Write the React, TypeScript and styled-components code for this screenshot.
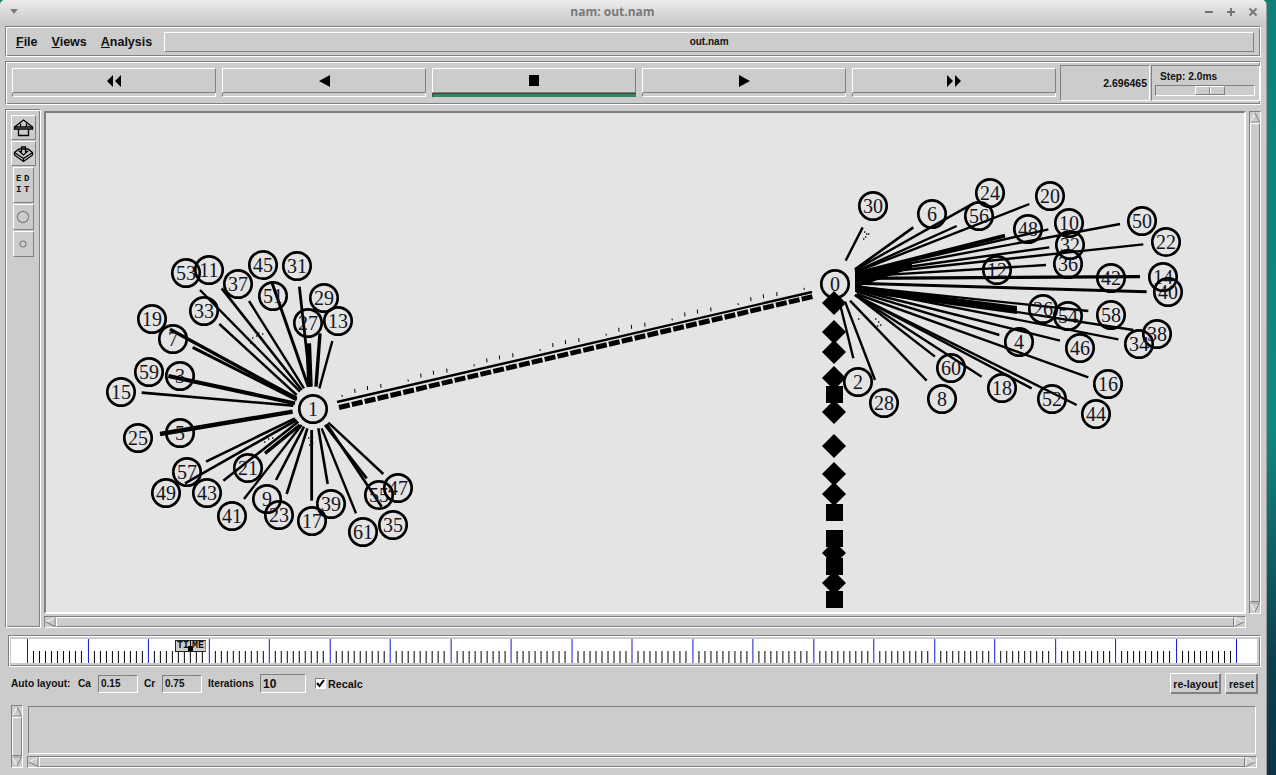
import React from "react";
import styled, { createGlobalStyle, css } from "styled-components";

const Global = createGlobalStyle`
  html, body { margin: 0; padding: 0; background: #0f7f78; overflow: hidden; }
  * { box-sizing: border-box; }
`;

const raised = css`
  border-style: solid;
  border-width: 1px;
  border-color: #fff #808080 #808080 #fff;
`;
const sunken = css`
  border-style: solid;
  border-width: 1px;
  border-color: #808080 #fff #fff #808080;
`;
const groove = css`
  ${sunken};
  box-shadow: inset 1px 1px 0 #fff, inset -1px -1px 0 #808080;
`;
const uiFont = css`
  font-family: "Liberation Sans", Arial, sans-serif;
  font-weight: 700;
  color: #111;
`;

const Screen = styled.div`
  width: 1276px;
  height: 775px;
  display: flex;
  overflow: hidden;
`;
const Win = styled.div`
  width: 1267px;
  height: 775px;
  background: #cccccc;
  display: flex;
  flex-direction: column;
  border-right: 1px solid #9a9a9a;
  border-radius: 5px 5px 0 0;
  overflow: hidden;
`;
const Desktop = styled.div`
  flex: 1;
  background: linear-gradient(170deg, #0f7f78 0%, #12897f 55%, #0c3f4c 85%, #0e3346 100%);
`;
const TitleBar = styled.div`
  height: 26px;
  flex: none;
  background: linear-gradient(#ececec, #c6c6c6);
  display: flex;
  align-items: center;
  justify-content: space-between;
  padding: 0 8px 2px 10px;
  position: relative;
`;
const TitleText = styled.div`
  position: absolute;
  left: 0;
  right: 41px;
  top: 3px;
  text-align: center;
  font: 700 12px "Open Sans", "DejaVu Sans", sans-serif;
  color: #7a7a7a;
`;
const WinButtons = styled.div`
  display: flex;
  gap: 12px;
  align-items: center;
`;
const MenuFrame = styled.div`
  ${groove};
  height: 31px;
  margin: 0 5px;
  flex: none;
  display: flex;
  align-items: center;
  padding: 0 6px 0 10px;
`;
const MenuItem = styled.div`
  ${uiFont};
  font-size: 12.5px;
  margin-right: 14px;
  u { text-decoration: underline; }
`;
const FileName = styled.div`
  ${raised};
  ${uiFont};
  font-size: 10px;
  flex: 1;
  height: 20px;
  margin-left: -2px;
  display: flex;
  align-items: center;
  justify-content: center;
`;
const ToolFrame = styled.div`
  ${groove};
  height: 44px;
  margin: 4px 5px 0;
  flex: none;
  display: flex;
  padding: 3px 1px 3px 6px;
`;
const PlayColumn = styled.div`
  width: 204px;
  flex: none;
  margin: 3px 6px 0 0;
  display: flex;
  flex-direction: column;
`;
const PlayButton = styled.div`
  ${raised};
  height: 25px;
  display: flex;
  align-items: center;
  justify-content: center;
`;
const PlayStrip = styled.div<{ $on?: boolean }>`
  height: 4px;
  background: ${(p) => (p.$on ? "#2e8b5b" : "#cccccc")};
  border-style: solid;
  border-width: ${(p) => (p.$on ? "1px 0 0 1px" : "0 1px 1px 1px")};
  border-color: ${(p) => (p.$on ? "#444" : "#fff")};
  border-left-color: ${(p) => (p.$on ? "#444" : "#808080")};
`;
const TimeBox = styled.div`
  ${sunken};
  ${uiFont};
  font-size: 10.5px;
  width: 90px;
  flex: none;
  margin-left: -2px;
  display: flex;
  align-items: center;
  justify-content: flex-end;
  padding-right: 2px;
`;
const StepBox = styled.div`
  ${sunken};
  ${uiFont};
  width: 109px;
  flex: none;
  margin-left: 1px;
  padding: 4px 3px 0;
  font-size: 10.2px;
`;
const StepLabel = styled.div`
  padding-left: 5px;
  height: 14px;
  line-height: 13px;
`;
const SliderTrack = styled.div`
  ${sunken};
  height: 11px;
  width: 100px;
  position: relative;
  margin-top: 1px;
`;
const SliderThumb = styled.div`
  ${raised};
  position: absolute;
  left: 39px;
  top: 0;
  height: 9px;
  width: 30px;
  &::after {
    content: "";
    position: absolute;
    left: 13px;
    top: 0;
    bottom: 0;
    border-left: 1px solid #808080;
    border-right: 1px solid #fff;
  }
`;
const Main = styled.div`
  height: 519px;
  margin: 4px 5px 0;
  flex: none;
  display: flex;
`;
const SideBar = styled.div`
  ${groove};
  width: 36px;
  flex: none;
  display: flex;
  flex-direction: column;
  align-items: center;
  padding-top: 5px;
`;
const SideButton = styled.div<{ $h: number; $narrow?: boolean }>`
  ${raised};
  width: ${(p) => (p.$narrow ? 21 : 25)}px;
  height: ${(p) => p.$h}px;
  margin-bottom: 1px;
  display: flex;
  align-items: center;
  justify-content: center;
  flex: none;
`;
const EditText = styled.div`
  font: 700 9px/11px "Liberation Mono", monospace;
  color: #111;
  text-align: center;
  letter-spacing: 2.6px;
  margin-right: -2px;
  white-space: pre;
`;
const CanvasColumn = styled.div`
  width: 1202px;
  flex: none;
  margin-left: 3px;
  margin-top: 2px;
  display: flex;
  flex-direction: column;
`;
const CanvasFrame = styled.div`
  ${sunken};
  border-width: 2px;
  border-color: #808080 #fff #fff #808080;
  height: 503px;
  background: #e4e4e4;
  overflow: hidden;
`;
const GraphSvg = styled.svg`
  display: block;
  width: 1198px;
  height: 499px;
`;
const HScroll = styled.div`
  ${sunken};
  height: 12px;
  margin-top: 2px;
  flex: none;
  display: flex;
  background: #cccccc;
`;
const VScroll = styled.div`
  ${sunken};
  width: 12px;
  margin-left: 3px;
  margin-top: 2px;
  height: 503px;
  display: flex;
  flex-direction: column;
  flex: none;
`;
const ScrollThumb = styled.div`
  ${raised};
  flex: 1;
`;
const ArrowCell = styled.div<{ $v?: boolean }>`
  width: ${(p) => (p.$v ? "100%" : "11px")};
  height: ${(p) => (p.$v ? "11px" : "100%")};
  display: block;
  flex: none;
  svg { display: block; width: 100%; height: 100%; }
`;
const TimelineFrame = styled.div`
  ${groove};
  height: 32px;
  margin: 7px 5px 0 8px;
  padding: 3px 3px 3px 2px;
  flex: none;
`;
const TimelineInner = styled.div`
  height: 24px;
  background: #fff;
  position: relative;
  svg { display: block; width: 100%; height: 100%; }
`;
const TimeMarker = styled.div`
  position: absolute;
  left: 164px;
  top: 1px;
  width: 31px;
  height: 12px;
  background: #cccccc;
  border: 1px solid #222;
  border-right-color: #888;
  font: 700 10px/10px "Liberation Mono", monospace;
  color: #111;
  display: flex;
  justify-content: space-between;
  padding: 0 1px;
  &::before {
    content: "";
    position: absolute;
    left: 14px;
    top: 0;
    width: 1px;
    height: 10px;
    background: #000;
  }
  &::after {
    content: "";
    position: absolute;
    left: 12px;
    top: 5px;
    width: 5px;
    height: 5px;
    background: #000;
  }
`;
const AutoRow = styled.div`
  ${uiFont};
  font-size: 10.2px;
  height: 21px;
  margin: 6px 8px 0 11px;
  flex: none;
  display: flex;
  align-items: center;
`;
const AutoLabel = styled.div<{ $w: number }>`
  width: ${(p) => p.$w}px;
  flex: none;
`;
const RecalcLabel = styled.div`
  font-size: 10.8px;
`;
const Field = styled.div<{ $w: number; $big?: boolean }>`
  ${sunken};
  width: ${(p) => p.$w}px;
  height: ${(p) => (p.$big ? 19 : 18)}px;
  font-size: ${(p) => (p.$big ? 12 : 10)}px;
  padding-left: 2px;
  margin-right: 6px;
  display: flex;
  align-items: center;
  flex: none;
`;
const Check = styled.div`
  ${sunken};
  width: 11px;
  height: 11px;
  background: #fff;
  margin: 0 2px 0 3px;
  display: flex;
  svg { display: block; }
`;
const Spacer = styled.div`
  flex: 1;
`;
const ActionButton = styled.div<{ $w: number }>`
  ${raised};
  box-shadow: inset -1px -1px 0 #808080;
  font-size: 10.5px;
  width: ${(p) => p.$w}px;
  height: 21px;
  margin-left: 4px;
  display: flex;
  align-items: center;
  justify-content: center;
`;
const LogArea = styled.div`
  height: 63px;
  margin: 11px 9px 0 11px;
  display: flex;
  flex: none;
`;
const LogV = styled.div`
  ${sunken};
  width: 12px;
  height: 63px;
  display: flex;
  flex-direction: column;
  flex: none;
`;
const LogColumn = styled.div`
  flex: 1;
  margin-left: 4px;
  display: flex;
  flex-direction: column;
`;
const LogBox = styled.div`
  ${sunken};
  height: 50px;
  margin: 1px 1px 0 1px;
`;

/* ---------- graph data, in screen coordinates ---------- */
const nodes: [string, number, number][] = [
  ["53",186,273],["11",209,270],["45",263,265],["31",297,266],["37",238,284],["51",273,296],
  ["29",324,298],["27",308,323],["13",338,321],["33",204,311],["19",152,319],["7",173,339],
  ["59",149,372],["3",180,376],["15",121,392],["1",313,409],["25",138,438],["5",180,433],
  ["57",187,472],["21",248,468],["49",166,493],["43",207,493],["41",232,516],["9",267,499],
  ["23",279,515],["17",312,521],["39",331,504],["55",379,495],["47",398,488],["35",393,525],
  ["61",363,532],
  ["30",873,206],["6",932,214],["24",990,193],["56",979,216],["20",1050,196],["48",1028,229],
  ["10",1069,223],["32",1070,245],["36",1068,264],["50",1142,221],["22",1166,242],["12",997,270],
  ["42",1111,278],["14",1163,277],["40",1168,292],["0",835,284],["26",1043,309],["54",1068,316],
  ["58",1111,315],["38",1157,334],["34",1139,344],["46",1080,348],["4",1019,342],["16",1108,384],
  ["60",951,368],["18",1002,388],["8",942,399],["52",1052,399],["44",1096,414],["2",858,382],
  ["28",884,403],
];

/* x1 y1 x2 y2 width, measured on 3x crops of each cluster */
const leftLinks: number[][] = [
  [300,150,600,455,2.4],[365,145,605,450,2.6],[358,252,590,465,2.4],[447,183,612,445,2.4],[515,125,625,440,3],
  [598,140,632,440,2.8],[625,310,630,440,5.5],[660,280,648,440,3.4],[697,303,658,445,2.4],[210,268,590,475,3.4],
  [278,322,590,480,3],[205,408,585,490,4],[125,458,580,497,2.6],[180,582,578,515,4.4],[318,665,585,535,2.6],
  [255,730,590,540,2.6],[370,722,595,545,2.6],[495,640,600,555,3.4],[432,777,605,555,2.4],[528,720,612,560,2.6],
  [560,762,622,565,2.6],[635,782,635,570,2.8],[683,732,655,565,2.6],[768,820,665,565,2.4],[800,715,675,555,2.8],
  [845,800,680,552,2.6],[850,702,685,548,2.4],
];
const rightLinks: number[][] = [
  [188,172,137,272,2.4],[340,172,165,298,2.6],[470,168,165,305,2.4],[520,100,165,300,2.4],[688,102,170,305,2.4],
  [615,197,170,310,3.8],[745,178,170,310,2.4],[748,232,170,312,2.4],[960,162,170,310,2.4],[1030,223,170,315,2.4],
  [738,285,170,320,2.4],[1020,320,170,325,3.4],[1040,365,170,340,3],[865,423,170,350,2.4],[1000,480,170,352,2.4],
  [955,508,170,355,2.4],[780,512,170,360,2.4],[598,495,170,365,2.4],[865,622,170,372,2.4],[405,560,170,378,2.4],
  [545,620,165,375,2.4],[695,655,165,375,2.4],[830,705,165,375,2.4],[380,632,150,392,2.4],[160,565,122,410,2.4],
  [225,630,135,395,2.4],
];
const mapLeft = (l: number[]) => [100 + l[0] / 3, 240 + l[1] / 3, 100 + l[2] / 3, 240 + l[3] / 3, l[4]];
const mapRight = (l: number[]) => [800 + l[0] / 3, 170 + l[1] / 3, 800 + l[2] / 3, 170 + l[3] / 3, l[4]];
const links = [...leftLinks.map(mapLeft), ...rightLinks.map(mapRight)];

const diamonds = [303, 332, 352, 378, 412, 446, 474, 494, 553, 583];
const squares = [386, 504, 530, 558, 591];
const lineY = (x: number) => 402 - (x - 337) * 0.2316;
const ticks: [number, number, number][] = [];
for (let g = 0; g < 8; g++) {
  [0, 12.7, 25.3, 38.7].forEach((d, i) => {
    const x = 342 + g * 66 + d;
    if (x < 812) ticks.push([x, lineY(x) - [6, 9, 9, 8][i], i === 0 ? 2 : 4]);
  });
}
const specks: [number, number][] = [
  [864,231],[866,233],[863,238],[865,236],[868,233],
  [875,318],[878,321],[880,324],[877,325],[858,318],
  [248,339],[252,337],[256,335],[250,342],[254,344],[258,332],[262,333],
  [264,441],[268,438],[272,437],[266,436],[308,437],[310,440],[312,442],[309,444],
];

const Graph = () => (
  <GraphSvg viewBox="46 113 1198 499">
    <g stroke="#000" strokeLinecap="butt">
      {links.map((l, i) => (
        <line key={i} x1={l[0]} y1={l[1]} x2={l[2]} y2={l[3]} strokeWidth={l[4]} />
      ))}
      <polygon points="855,285 1017,306 1017,314 855,292" fill="#000" stroke="none" />
      <polygon points="855,272 912,260 912,268 855,288" fill="#000" stroke="none" />
      <line x1="337" y1="402" x2="812" y2="292" strokeWidth="2.4" />
      <line x1="339" y1="407.5" x2="813" y2="296.5" strokeWidth="5" strokeDasharray="11 2.2" />
      {ticks.map(([x, y, h], i) => (
        <line key={i} x1={x} y1={y} x2={x + 0.3} y2={y + h} strokeWidth="1" />
      ))}
    </g>
    <g fill="#000">
      {specks.map(([x, y], i) => (
        <rect key={i} x={x} y={y} width="1.4" height="2" opacity="0.7" />
      ))}
      {diamonds.map((y) => (
        <polygon key={y} points={`834,${y - 12} 846,${y} 834,${y + 12} 822,${y}`} />
      ))}
      {squares.map((y) => (
        <rect key={y} x="826" y={y} width="17" height="17" />
      ))}
    </g>
    {nodes.map(([n, x, y]) => (
      <g key={n}>
        <circle cx={x} cy={y} r="13.7" fill="none" stroke="#000" strokeWidth="2.7" />
        <text x={x} y={y + 6.5} textAnchor="middle" fontFamily="'Liberation Serif', serif" fontSize="20" fill="#14141f">
          {n}
        </text>
      </g>
    ))}
  </GraphSvg>
);

const Tri = ({ dir }: { dir: "up" | "down" | "left" | "right" }) => {
  const pts = { up: "5.5,0.5 10.5,10.5 0.5,10.5", down: "0.5,0.5 10.5,0.5 5.5,10.5", left: "0.5,5.5 10.5,0.5 10.5,10.5", right: "0.5,0.5 10.5,5.5 0.5,10.5" }[dir];
  return (
    <svg viewBox="0 0 11 11">
      <polygon points={pts} fill="#cccccc" stroke="#fff" strokeWidth="1" />
      <polyline
        points={{ up: "5.5,0.5 10.5,10.5 0.5,10.5", down: "0.5,0.5 10.5,0.5 5.5,10.5", left: "10.5,0.5 10.5,10.5 0.5,5.5", right: "0.5,10.5 10.5,5.5" }[dir]}
        fill="none"
        stroke="#808080"
        strokeWidth="1.2"
      />
    </svg>
  );
};

const playIcons: [string, string][] = [
  ["M0 6 L6 0 V12Z M8 6 L14 0 V12Z", "0 0 14 12"],
  ["M0 6 L11 0 V12Z", "0 0 11 12"],
  ["M0 0 H10 V11 H0Z", "0 0 10 11"],
  ["M0 0 L11 6 L0 12Z", "0 0 11 12"],
  ["M0 0 L6 6 L0 12Z M8 0 L14 6 L8 12Z", "0 0 14 12"],
];

const Timeline = () => {
  const items: React.ReactNode[] = [];
  const w = 1247;
  for (let i = 0; i <= 200; i++) {
    const x = Math.round(16 + i * 6.05) + 0.5;
    if (i % 10 === 0) {
      items.push(<line key={i} x1={x} x2={x} y1="0" y2="24" stroke="#1414d2" strokeWidth="1" />);
    } else {
      items.push(<line key={i} x1={x} x2={x} y1="12" y2="24" stroke="#000" strokeWidth="1" />);
    }
  }
  return <svg viewBox={`0 0 ${w} 24`}>{items}</svg>;
};

export default function App() {
  return (
    <Screen>
      <Global />
      <Win>
        <TitleBar>
          <svg width="8" height="6" viewBox="0 0 8 6">
            <polygon points="0,0 8,0 4,5" fill="#7d7d7d" />
          </svg>
          <TitleText>nam: out.nam</TitleText>
          <WinButtons>
            <svg width="10" height="10" viewBox="0 0 10 10">
              <rect x="1" y="4" width="8" height="2" fill="#777" />
            </svg>
            <svg width="10" height="10" viewBox="0 0 10 10">
              <path d="M1 4h3V1h2v3h3v2H6v3H4V6H1z" fill="#777" />
            </svg>
            <svg width="10" height="10" viewBox="0 0 10 10">
              <path d="M1.5 1.5L8.5 8.5M8.5 1.5L1.5 8.5" stroke="#777" strokeWidth="2" />
            </svg>
          </WinButtons>
        </TitleBar>

        <MenuFrame>
          <MenuItem><u>F</u>ile</MenuItem>
          <MenuItem><u>V</u>iews</MenuItem>
          <MenuItem><u>A</u>nalysis</MenuItem>
          <FileName>out.nam</FileName>
        </MenuFrame>

        <ToolFrame>
          {playIcons.map(([d, vb], i) => (
            <PlayColumn key={i}>
              <PlayButton>
                <svg width={vb.split(" ")[2]} height={vb.split(" ")[3]} viewBox={vb}>
                  <path d={d} fill="#000" />
                </svg>
              </PlayButton>
              <PlayStrip $on={i === 2} />
            </PlayColumn>
          ))}
          <TimeBox>2.696465</TimeBox>
          <StepBox>
            <StepLabel>Step: 2.0ms</StepLabel>
            <SliderTrack>
              <SliderThumb />
            </SliderTrack>
          </StepBox>
        </ToolFrame>

        <Main>
          <SideBar>
            <SideButton $h={25}>
              <svg width="21" height="18" viewBox="0 0 21 18" fill="none" stroke="#000" strokeWidth="1.3">
                <path d="M10.5 1 L19.5 8 V10 H1.5 V8 Z" />
                <path d="M1.5 8 H19.5" />
                <path d="M5.5 10 V16.5 H15.5 V10" />
                <path d="M7.5 4.5 V8 M13.5 4.5 V8" />
              </svg>
            </SideButton>
            <SideButton $h={25}>
              <svg width="21" height="18" viewBox="0 0 21 18" fill="none" stroke="#000" strokeWidth="1.3">
                <path d="M1.5 7.5 L6 4 H15 L19.5 7.5 V10 L10.5 16.5 L1.5 10 Z" />
                <path d="M1.5 7.5 L10.5 13.5 L19.5 7.5 M10.5 13.5 V16.5" />
                <path d="M10.5 10 L6.5 6.5 H8.5 V2 H12.5 V6.5 H14.5 Z" />
              </svg>
            </SideButton>
            <SideButton $h={36} $narrow>
              <EditText>{"ED\nIT"}</EditText>
            </SideButton>
            <SideButton $h={26} $narrow>
              <svg width="14" height="14" viewBox="0 0 14 14">
                <circle cx="7" cy="7" r="5.6" fill="none" stroke="#808080" strokeWidth="1.2" />
              </svg>
            </SideButton>
            <SideButton $h={26} $narrow>
              <svg width="10" height="10" viewBox="0 0 10 10">
                <circle cx="5" cy="5" r="3" fill="none" stroke="#808080" strokeWidth="1.2" />
              </svg>
            </SideButton>
          </SideBar>
          <CanvasColumn>
            <CanvasFrame>
              <Graph />
            </CanvasFrame>
            <HScroll>
              <ArrowCell><Tri dir="left" /></ArrowCell>
              <ScrollThumb />
              <ArrowCell><Tri dir="right" /></ArrowCell>
            </HScroll>
          </CanvasColumn>
          <VScroll>
            <ArrowCell $v><Tri dir="up" /></ArrowCell>
            <ScrollThumb />
            <ArrowCell $v><Tri dir="down" /></ArrowCell>
          </VScroll>
        </Main>

        <TimelineFrame>
          <TimelineInner>
            <Timeline />
            <TimeMarker><span>TI</span><span>ME</span></TimeMarker>
          </TimelineInner>
        </TimelineFrame>

        <AutoRow>
          <AutoLabel $w={67}>Auto layout:</AutoLabel>
          <AutoLabel $w={20}>Ca</AutoLabel>
          <Field $w={40}>0.15</Field>
          <AutoLabel $w={18}>Cr</AutoLabel>
          <Field $w={40}>0.75</Field>
          <AutoLabel $w={52}>Iterations</AutoLabel>
          <Field $w={46} $big>10</Field>
          <Check>
            <svg width="9" height="9" viewBox="0 0 9 9">
              <path d="M1 4 L3.5 7 L8 1" fill="none" stroke="#000" strokeWidth="2" />
            </svg>
          </Check>
          <RecalcLabel>Recalc</RecalcLabel>
          <Spacer />
          <ActionButton $w={51}>re-layout</ActionButton>
          <ActionButton $w={33}>reset</ActionButton>
        </AutoRow>

        <LogArea>
          <LogV>
            <ArrowCell $v><Tri dir="up" /></ArrowCell>
            <ScrollThumb />
            <ArrowCell $v><Tri dir="down" /></ArrowCell>
          </LogV>
          <LogColumn>
            <LogBox />
            <HScroll>
              <ArrowCell><Tri dir="left" /></ArrowCell>
              <ScrollThumb />
              <ArrowCell><Tri dir="right" /></ArrowCell>
            </HScroll>
          </LogColumn>
        </LogArea>
      </Win>
      <Desktop />
    </Screen>
  );
}
